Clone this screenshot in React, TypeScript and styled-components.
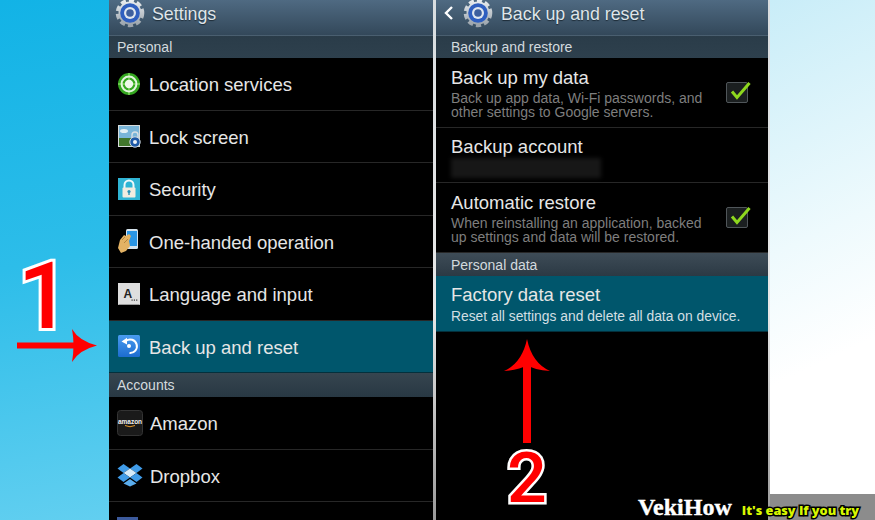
import styled, { createGlobalStyle } from 'styled-components'

const GlobalStyle = createGlobalStyle`
  html, body {
    margin: 0;
    padding: 0;
    background: #fff;
  }
  * {
    box-sizing: border-box;
  }
`

function Gear () {
  return (
    <svg width="30" height="30" viewBox="0 0 30 30">
      <defs>
        <linearGradient id="gearMetal" x1="0" y1="0" x2="0" y2="1">
          <stop offset="0" stopColor="#e8ecef"/>
          <stop offset="1" stopColor="#9aa3ab"/>
        </linearGradient>
      </defs>
      <circle cx="15" cy="15" r="12.5" fill="none" stroke="url(#gearMetal)" strokeWidth="3.6" strokeDasharray="5.2 3"/>
      <circle cx="15" cy="15" r="11.5" fill="url(#gearMetal)"/>
      <circle cx="15" cy="15" r="9.8" fill="#2f5fc0"/>
      <circle cx="15" cy="15" r="6" fill="#dfe6ee"/>
      <circle cx="15" cy="15" r="3.8" fill="#3d5f9e"/>
    </svg>
  )
}

function LocationIcon () {
  return (
    <svg width="24" height="24" viewBox="0 0 24 24">
      <circle cx="12" cy="12" r="11" fill="#35a820"/>
      <path d="M12 1v22M1 12h22" stroke="#7cd35c" strokeWidth="1.5"/>
      <circle cx="12" cy="12" r="7.4" fill="none" stroke="#e4f5de" strokeWidth="2"/>
      <circle cx="12" cy="12" r="4.2" fill="#eef8ea"/>
    </svg>
  )
}

function LockScreenIcon () {
  return (
    <svg width="24" height="24" viewBox="0 0 24 24">
      <rect x="1" y="1" width="22" height="22" fill="#d8dcdc"/>
      <rect x="2" y="2" width="20" height="13" fill="#79b5d8"/>
      <ellipse cx="7" cy="7" rx="4" ry="2" fill="#e4f0f4"/>
      <rect x="2" y="14" width="20" height="8" fill="#41762c"/>
      <path d="M15 14v-3a3 3 0 0 1 6 0v3" fill="none" stroke="#d8dfe4" strokeWidth="1.4"/>
      <circle cx="18" cy="18" r="5.2" fill="#1f5aa8" stroke="#cfd8e0"/>
      <circle cx="18" cy="18" r="2" fill="#eef3f8"/>
    </svg>
  )
}

function SecurityIcon () {
  return (
    <svg width="24" height="24" viewBox="0 0 24 24">
      <rect x="1" y="1" width="22" height="22" fill="#2fb4d4"/>
      <path d="M7.5 11V8a4.5 4.5 0 0 1 9 0v3" fill="none" stroke="#eef8fa" strokeWidth="2"/>
      <rect x="5.5" y="10.5" width="13" height="10" rx="1" fill="#f2ece0"/>
      <circle cx="12" cy="14.5" r="1.6" fill="#2a93b8"/>
      <rect x="11.3" y="15" width="1.4" height="3" fill="#2a93b8"/>
    </svg>
  )
}

function HandIcon () {
  return (
    <svg width="24" height="26" viewBox="0 0 24 26">
      <rect x="9" y="1" width="12" height="20" rx="1.5" fill="#d6e4ee"/>
      <rect x="10" y="3" width="10" height="15" fill="#2a96e6"/>
      <path d="M3 12l4-5 2 1 3-2 2 2-2 5 1 5-4 5-5 2-3-5z" fill="#e3b264"/>
      <path d="M5 12l3-3M7 15l4-4" stroke="#a87a34" strokeWidth="0.8"/>
    </svg>
  )
}

function LanguageIcon () {
  return (
    <svg width="24" height="24" viewBox="0 0 24 24">
      <rect x="1" y="1" width="22" height="22" fill="#dedede"/>
      <path d="M1 23L2 22H22L23 23z" fill="#9a9a9a"/>
      <rect x="14.5" y="17.5" width="1.2" height="1.2" fill="#333"/>
      <rect x="16.8" y="17.5" width="1.2" height="1.2" fill="#333"/>
      <rect x="19.1" y="17.5" width="1.2" height="1.2" fill="#333"/>
      <text x="6.5" y="15.5" fontFamily="Liberation Sans, sans-serif" fontWeight="700" fontSize="12" fill="#222">A</text>
    </svg>
  )
}

function BackupIcon () {
  return (
    <svg width="24" height="24" viewBox="0 0 24 24">
      <defs>
        <linearGradient id="backupBlue" x1="0" y1="0" x2="0" y2="1">
          <stop offset="0" stopColor="#4a9cf0"/>
          <stop offset="1" stopColor="#1c6cd0"/>
        </linearGradient>
      </defs>
      <rect x="1" y="1" width="22" height="22" rx="1.5" fill="url(#backupBlue)"/>
      <path d="M9 6.8A6.8 6.8 0 1 1 12.5 19" fill="none" stroke="#fff" strokeWidth="2"/>
      <path d="M4.5 7.5L10 3.8V10.5z" fill="#fff"/>
      <circle cx="12" cy="12" r="2" fill="#fff"/>
    </svg>
  )
}

function AmazonIcon () {
  return (
    <svg width="26" height="26" viewBox="0 0 26 26">
      <rect x="0.5" y="0.5" width="25" height="25" rx="3" fill="#1a1a1a" stroke="#333"/>
      <text x="13" y="13.5" textAnchor="middle" fontFamily="Liberation Sans, sans-serif" fontWeight="700" fontSize="6.5" fill="#f2f2f2">amazon</text>
      <path d="M8 15.5q5 2.5 10 0" fill="none" stroke="#e89a2c" strokeWidth="1"/>
    </svg>
  )
}

function DropboxIcon () {
  return (
    <svg width="26" height="24" viewBox="0 0 26 24">
      <path d="M6.5 1L13 5.5 6.5 10 0.5 5.5z" fill="#3f9be8"/>
      <path d="M19.5 1L25.5 5.5 19.5 10 13 5.5z" fill="#3f9be8"/>
      <path d="M6.5 10L13 5.5 19.5 10 13 14.5z" fill="#d5ebfb"/>
      <path d="M6.5 10L13 14.5 6.5 19 0.5 14.5z" fill="#3f9be8"/>
      <path d="M19.5 10L25.5 14.5 19.5 19 13 14.5z" fill="#3f9be8"/>
      <path d="M6.5 20.5L13 16 19.5 20.5 13 23.5z" fill="#5aaced"/>
    </svg>
  )
}

function Checkmark () {
  return (
    <svg width="26" height="26" viewBox="0 0 26 26">
      <path d="M5 12.5l5 6L22.5 4" fill="none" stroke="#8ed81e" strokeWidth="3"/>
    </svg>
  )
}

const leftRows = [
  { label: 'Location services', icon: <LocationIcon/> },
  { label: 'Lock screen', icon: <LockScreenIcon/> },
  { label: 'Security', icon: <SecurityIcon/> },
  { label: 'One-handed operation', icon: <HandIcon/> },
  { label: 'Language and input', icon: <LanguageIcon/> },
  { label: 'Back up and reset', icon: <BackupIcon/>, active: true },
]

const accountRows = [
  { label: 'Amazon', icon: <AmazonIcon/> },
  { label: 'Dropbox', icon: <DropboxIcon/> },
]

export default function App () {
  return (
    <>
      <GlobalStyle/>
      <Page>
        <LeftBackdrop/>
        <Phone $width={324}>
          <TitleBar>
            <GearSlot><Gear/></GearSlot>
            <Title>Settings</Title>
          </TitleBar>
          <Section>Personal</Section>
          {leftRows.map(row => (
            <IconRow key={row.label} $active={row.active}>
              <IconSlot>{row.icon}</IconSlot>
              <IconRowLabel>{row.label}</IconRowLabel>
            </IconRow>
          ))}
          <Section $tone="lower">Accounts</Section>
          {accountRows.map(row => (
            <IconRow key={row.label}>
              <IconSlot $wide>{row.icon}</IconSlot>
              <IconRowLabel>{row.label}</IconRowLabel>
            </IconRow>
          ))}
          <IconRow>
            <IconSlot><CutOffTile/></IconSlot>
          </IconRow>
        </Phone>
        <Divider $width={3}/>
        <Phone $width={332}>
          <TitleBar>
            <BackChevron viewBox="0 0 12 16">
              <path d="M9 2L3 8l6 6" fill="none" stroke="#fff" strokeWidth="2.4"/>
            </BackChevron>
            <GearSlot $tight><Gear/></GearSlot>
            <Title>Back up and reset</Title>
          </TitleBar>
          <Section $inset>Backup and restore</Section>
          <TextRow $height={70}>
            <TextBlock>
              <RowLabel>Back up my data</RowLabel>
              <Summary>Back up app data, Wi-Fi passwords, and<br/>other settings to Google servers.</Summary>
            </TextBlock>
            <CheckBox><CheckSlot><Checkmark/></CheckSlot></CheckBox>
          </TextRow>
          <TextRow $height={55}>
            <TextBlock>
              <RowLabel>Backup account</RowLabel>
              <BlurredAccount/>
            </TextBlock>
          </TextRow>
          <TextRow $height={70}>
            <TextBlock>
              <RowLabel>Automatic restore</RowLabel>
              <Summary>When reinstalling an application, backed<br/>up settings and data will be restored.</Summary>
            </TextBlock>
            <CheckBox><CheckSlot><Checkmark/></CheckSlot></CheckBox>
          </TextRow>
          <Section $tone="light" $inset>Personal data</Section>
          <TextRow $height={56} $active>
            <TextBlock>
              <RowLabel>Factory data reset</RowLabel>
              <Summary $active>Reset all settings and delete all data on device.</Summary>
            </TextBlock>
          </TextRow>
        </Phone>
        <Divider $width={2}/>
        <RightBackdrop>
          <Band/>
        </RightBackdrop>

        <StepOne>1</StepOne>
        <ArrowRight viewBox="0 0 82 34">
          <path d="M0 13.5H60V19.5H0z" fill="#f00"/>
          <path d="M55 0Q62 12 80 16.5Q62 21 55 33Q58 16 55 0z" fill="#f00"/>
        </ArrowRight>
        <ArrowUp viewBox="0 0 46 104">
          <path d="M19 25H27V104H19z" fill="#f00"/>
          <path d="M23 0Q28 24 46 32Q30 31 23 26Q16 31 0 32Q18 24 23 0z" fill="#f00"/>
        </ArrowUp>
        <StepTwo>2</StepTwo>

        <Watermark>
          <Brand>VekiHow</Brand>
          <Tagline>It's easy If you try</Tagline>
        </Watermark>
      </Page>
    </>
  )
}

const Page = styled.div`
  position: relative;
  display: flex;
  width: 875px;
  height: 520px;
  overflow: hidden;
  background: #000;
  font-family: "Liberation Sans", sans-serif;
`

const LeftBackdrop = styled.div`
  flex: 0 0 109px;
  background: linear-gradient(170deg, #12b3e6 0%, #2dbde9 50%, #62cff0 100%);
`

const RightBackdrop = styled.div`
  flex: 1;
  display: flex;
  flex-direction: column;
  justify-content: flex-end;
  background: linear-gradient(155deg, #c9edf8 0%, #eefafd 45%, #fff 68%);
`

const Band = styled.div`
  height: 26px;
  background: #8c8c8c;
`

const Divider = styled.div<{ $width: number }>`
  flex: 0 0 ${p => p.$width}px;
  background: linear-gradient(180deg, #d8dde0 0%, #e8e8e8 60%, #9a9a9a 100%);
`

const Phone = styled.div<{ $width: number }>`
  flex: 0 0 ${p => p.$width}px;
  display: flex;
  flex-direction: column;
  background: #000;
  overflow: hidden;
`

const TitleBar = styled.header`
  flex: 0 0 36px;
  display: flex;
  align-items: center;
  padding: 0 0 9px 6px;
  overflow: hidden;
  background: linear-gradient(180deg, #4f6a82 0%, #33485a 100%);
  border-bottom: 1px solid #4a5f70;
`

const GearSlot = styled.div<{ $tight?: boolean }>`
  flex: 0 0 30px;
  height: 30px;
  margin-left: ${p => p.$tight ? '8px' : '0'};
  margin-right: ${p => p.$tight ? '8px' : '7px'};
`

const BackChevron = styled.svg`
  width: 12px;
  height: 16px;
  margin-left: 1px;
`

const Title = styled.span`
  margin-top: 2px;
  font-size: 17.8px;
  color: #dfe5ea;
  text-shadow: 0 1px 1px #1c2a35;
`

const Section = styled.div<{ $tone?: 'lower' | 'light'; $inset?: boolean }>`
  flex: 0 0 ${p => p.$tone === 'lower' ? '24px' : p.$tone ? '23px' : '22px'};
  display: flex;
  align-items: center;
  padding-left: ${p => p.$inset ? '15px' : '8px'};
  font-size: 14px;
  color: #d3dade;
  background: ${p => p.$tone === 'light'
    ? 'linear-gradient(180deg, #3e4c57 0%, #2b3944 100%)'
    : p.$tone === 'lower'
      ? 'linear-gradient(180deg, #36454f 0%, #283843 100%)'
      : 'linear-gradient(180deg, #2a3c49 0%, #2e404d 100%)'};
`

const IconRow = styled.div<{ $active?: boolean }>`
  flex: 0 0 52.5px;
  display: flex;
  align-items: center;
  padding-left: 8px;
  background: ${p => p.$active ? '#00566c' : '#000'};
  border-bottom: 1px solid ${p => p.$active ? '#03303c' : '#272727'};
`

const IconSlot = styled.div<{ $wide?: boolean }>`
  flex: 0 0 ${p => p.$wide ? '33px' : '32px'};
  display: flex;
  align-items: center;
`

const CutOffTile = styled.div`
  width: 21px;
  height: 21px;
  background: #3c5a9c;
`

const RowLabel = styled.div`
  font-size: 18.5px;
  line-height: 22px;
  color: #e6e6e6;
`

const IconRowLabel = styled(RowLabel)`
  margin-top: 3px;
`

const TextRow = styled.div<{ $height: number; $active?: boolean }>`
  flex: 0 0 ${p => p.$height}px;
  display: flex;
  align-items: center;
  padding: 0 20px 0 15px;
  background: ${p => p.$active ? '#00566c' : '#000'};
  border-bottom: 1px solid ${p => p.$active ? '#03303c' : '#272727'};
`

const TextBlock = styled.div`
  flex: 1;
  display: flex;
  flex-direction: column;
`

const Summary = styled.div<{ $active?: boolean }>`
  margin-top: ${p => p.$active ? '3px' : '2px'};
  font-size: ${p => p.$active ? '13.85px' : '14px'};
  line-height: 14px;
  color: ${p => p.$active ? '#d2dfe3' : '#7e7e7e'};
`

const BlurredAccount = styled.div`
  width: 150px;
  height: 20px;
  margin-bottom: -4px;
  background: #171717;
  filter: blur(2px);
`

const CheckBox = styled.div`
  position: relative;
  width: 22px;
  height: 21px;
  background: #1b1f20;
  border: 1px solid #50565a;
  border-radius: 2px;
`

const CheckSlot = styled.div`
  position: absolute;
  top: -4px;
  left: 0;
`

const Digit = styled.div`
  position: absolute;
  font-family: Roboto, sans-serif;
  font-weight: 500;
  color: #f00;
  -webkit-text-stroke: 6px #fff;
  paint-order: stroke fill;
  line-height: 1.2;
`

const StepOne = styled(Digit)`
  top: 242px;
  left: 18px;
  font-size: 92px;
`

const StepTwo = styled(Digit)`
  top: 436px;
  left: 507px;
  font-size: 70px;
  -webkit-text-stroke-width: 5px;
`

const ArrowRight = styled.svg`
  position: absolute;
  top: 329px;
  left: 17px;
  width: 82px;
  height: 34px;
`

const ArrowUp = styled.svg`
  position: absolute;
  top: 339px;
  left: 504px;
  width: 46px;
  height: 104px;
`

const Watermark = styled.div`
  position: absolute;
  right: 16px;
  bottom: -1px;
  display: flex;
  align-items: baseline;
  gap: 10px;
`

const Brand = styled.span`
  font-family: "Liberation Serif", serif;
  font-weight: 700;
  font-size: 24px;
  color: #fff;
  -webkit-text-stroke: 0.4px #fff;
`

const Tagline = styled.span`
  font-family: "Open Sans", sans-serif;
  font-weight: 800;
  font-size: 12.7px;
  color: #d8f800;
  -webkit-text-stroke: 3px #000;
  paint-order: stroke fill;
`
